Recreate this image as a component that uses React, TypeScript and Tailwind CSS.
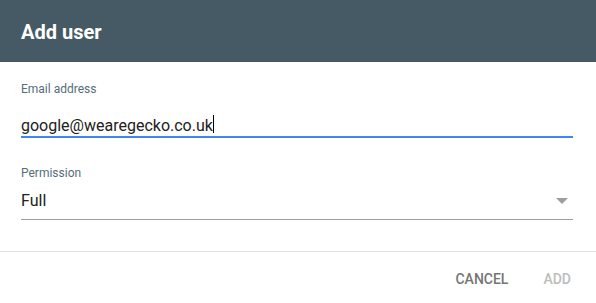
export default function App() {
  return (
    <div className="w-[596px] h-[303px] bg-white font-['Roboto',_'Liberation_Sans',_sans-serif] flex flex-col">
      <div className="h-[62px] bg-[#455a64] pl-[21px] flex items-center">
        <h1 className="text-[20px] font-bold text-white leading-6 pt-[1px]">Add user</h1>
      </div>

      <div className="pl-[21px] pr-[23px] pt-[19px]">
        <label className="block text-[12px] leading-4 text-[#546e7a]">Email address</label>
        <div className="mt-[19px] border-b-2 border-[#4285f4] h-[22px] flex">
          <span className="text-[16px] leading-5 text-[#212121]">google@wearegecko.co.uk</span>
          <span className="w-[1px] h-[18px] bg-black -mt-[1px]" />
        </div>

        <label className="block mt-[27px] text-[12px] leading-4 text-[#546e7a]">Permission</label>
        <div className="mt-[10px] border-b border-[#9e9e9e] h-[29px] flex justify-between">
          <span className="text-[16px] leading-5 text-[#212121]">Full</span>
          <svg width="12" height="6" viewBox="0 0 12 6" className="mt-[7px] mr-[5px]">
            <path d="M0 0 L12 0 L6 6 Z" fill="#9e9e9e" />
          </svg>
        </div>
      </div>

      <div className="mt-[31px] border-t border-[#e0e0e0] flex justify-end items-center gap-[35px] pr-[25px] pt-[19px]">
        <button className="text-[14px] font-medium leading-4 text-[#757575]">CANCEL</button>
        <button className="text-[14px] font-medium leading-4 text-[#bdbdbd]">ADD</button>
      </div>
    </div>
  );
}
